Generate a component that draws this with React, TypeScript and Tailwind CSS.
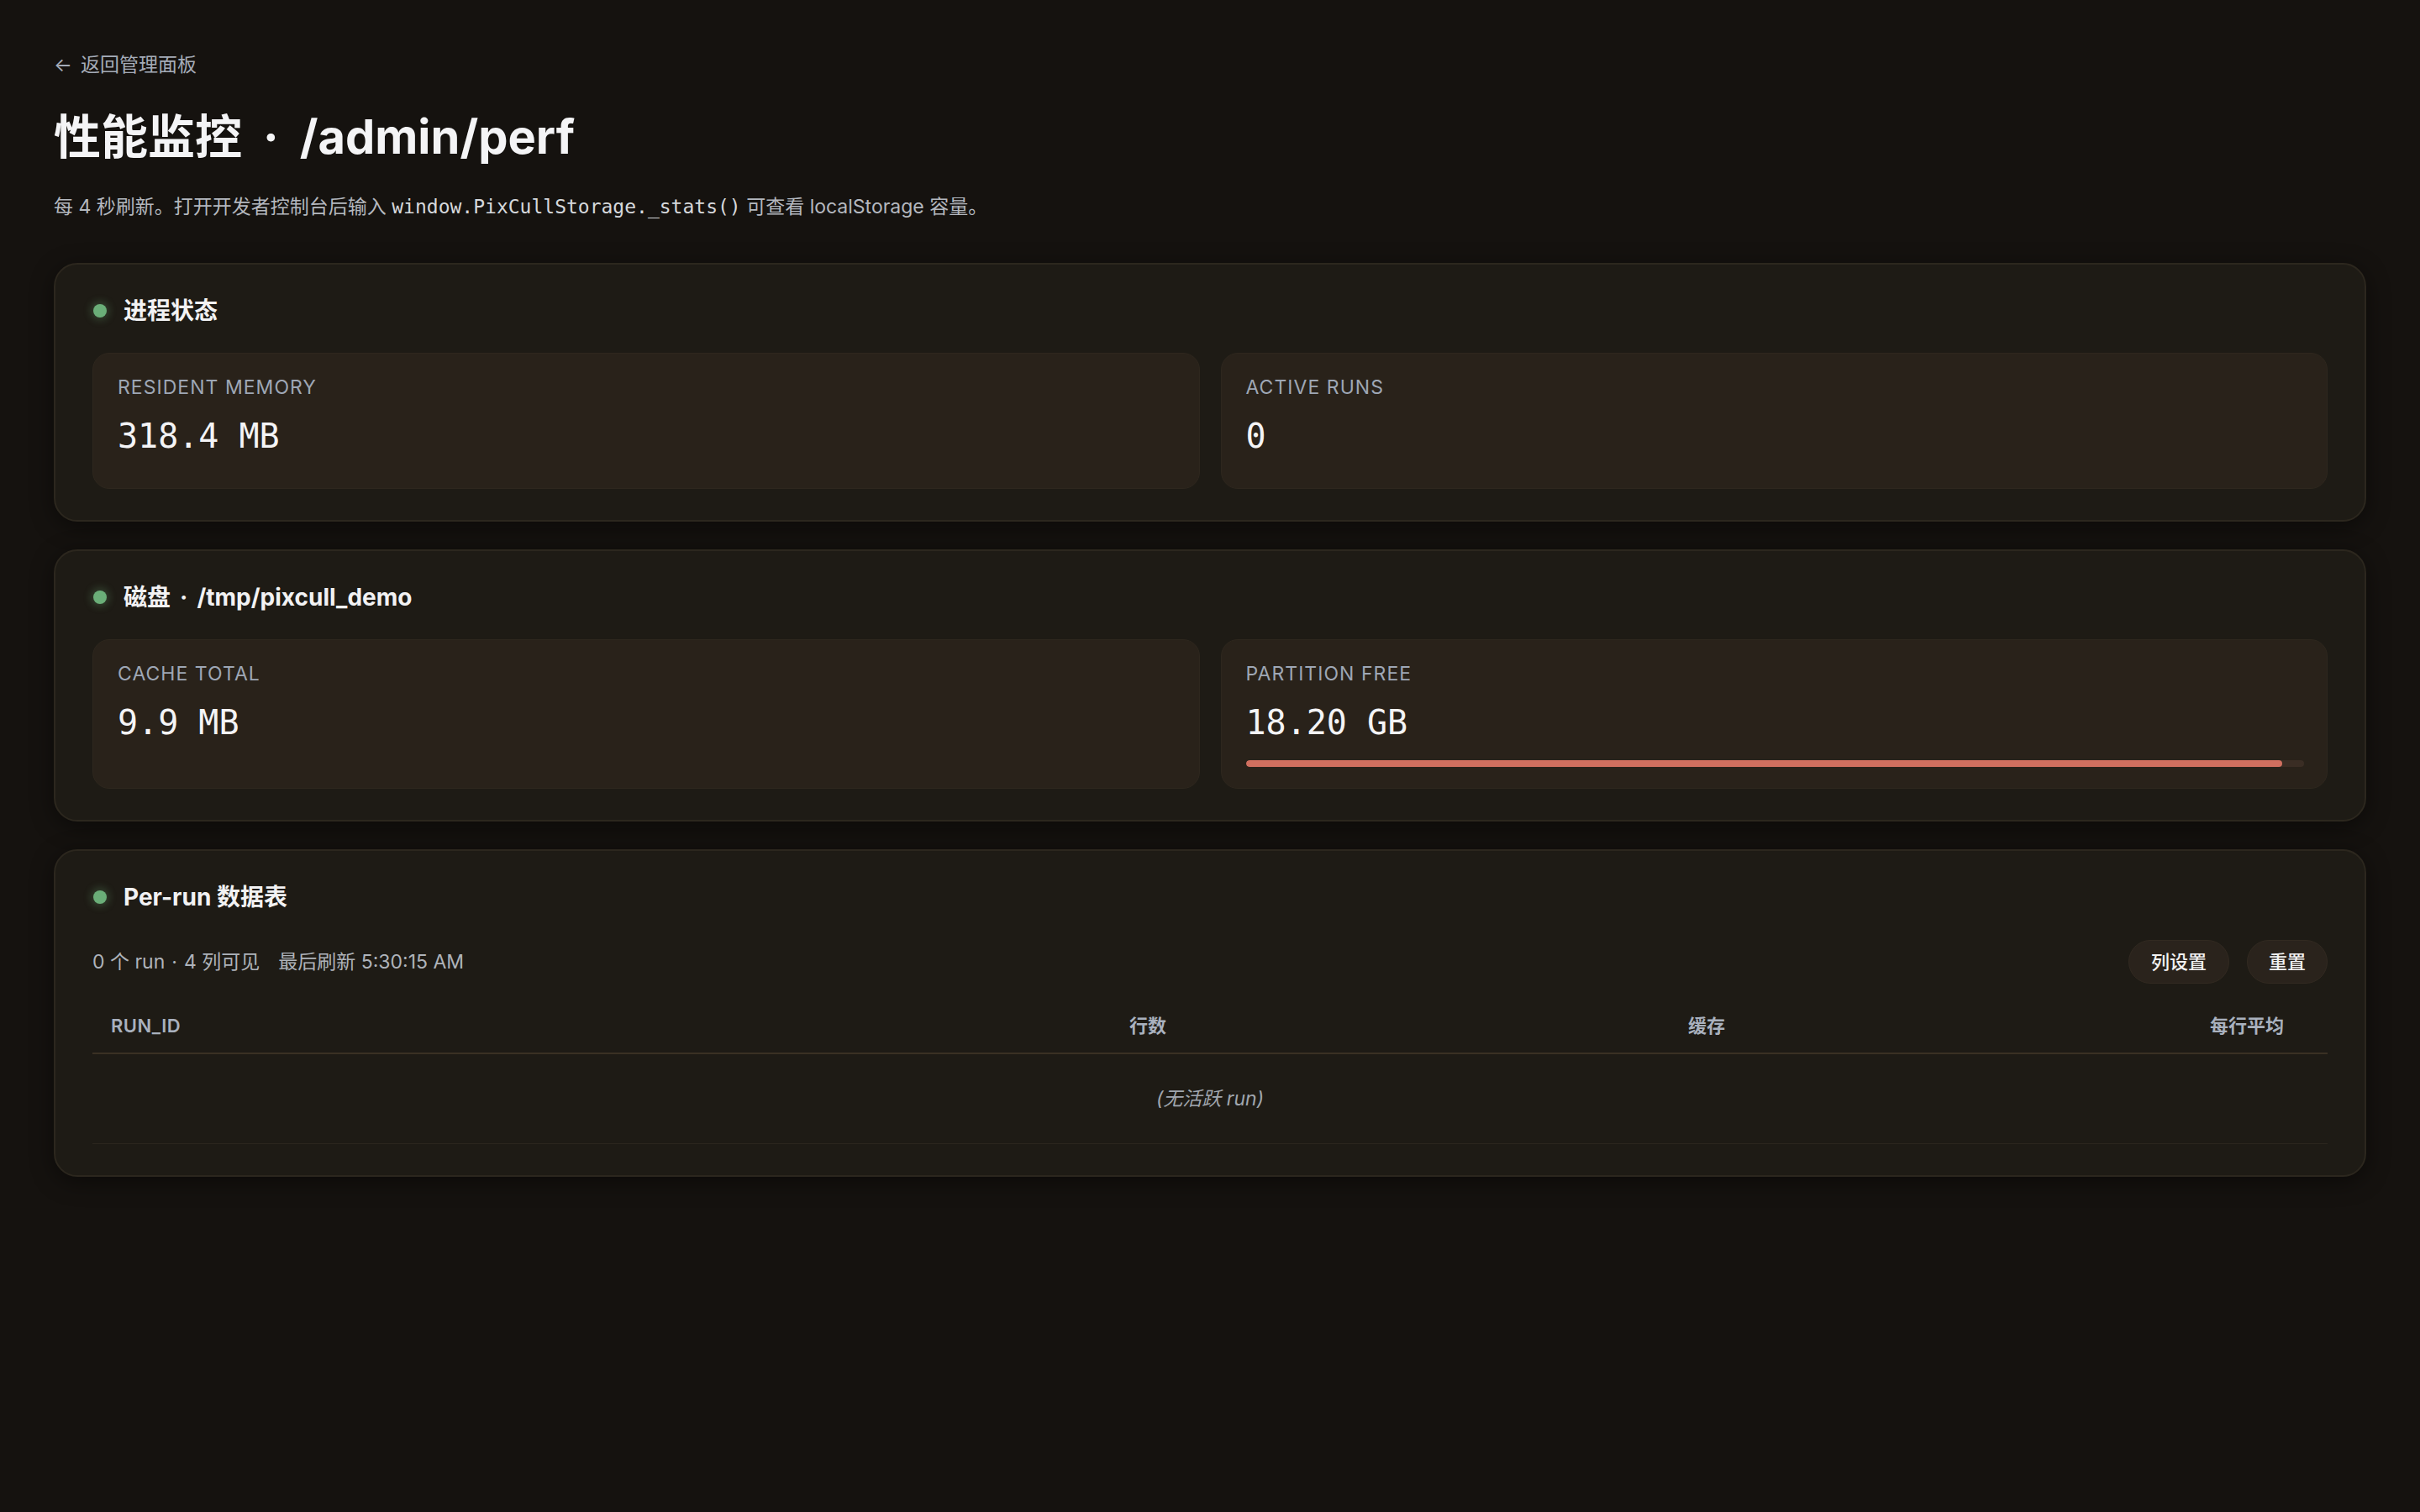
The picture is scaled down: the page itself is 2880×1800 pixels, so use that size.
import React from "react";

const SANS = "font-['Inter','Noto_Sans_CJK_SC',sans-serif]";
const MONO = "font-['DejaVu_Sans_Mono','Liberation_Mono',monospace]";

function Dot() {
  return (
    <span className="w-[16px] h-[16px] rounded-full bg-[#6aae78] shadow-[0_0_10px_3px_rgba(106,174,120,0.28)] shrink-0" />
  );
}

function CardTitle({ children }: { children: React.ReactNode }) {
  return (
    <div className="flex items-center gap-[20px] h-[40px] pl-[1px]">
      <Dot />
      <div className="text-[28px] font-bold text-[#f2f2f3] leading-[40px]">{children}</div>
    </div>
  );
}

function Card({ children }: { children: React.ReactNode }) {
  return (
    <div className="rounded-[28px] border-2 border-[#2c271e] bg-[#1e1b15] pt-[35px] px-[44px] pb-[37px] shadow-[0_6px_28px_rgba(0,0,0,0.45)]">
      {children}
    </div>
  );
}

function Stat({
  label,
  value,
  bar,
}: {
  label: string;
  value: string;
  bar?: number;
}) {
  return (
    <div
      className={
        "rounded-[20px] bg-[#29221a] border border-[#2e271e] pt-[23px] pl-[29px] pr-[27px] " +
        (bar !== undefined ? "pb-[25px]" : "pb-[38px]")
      }
    >
      <div className="text-[23px] leading-[34px] tracking-[0.045em] text-[#9ea7b5] uppercase">
        {label}
      </div>
      <div className={MONO + " slashed-zero mt-[17px] text-[40px] leading-[48px] text-[#f4f4f6]"}>{value}</div>
      {bar !== undefined && (
        <div className="mt-[21px] h-[8px] rounded-full bg-[#3a2d24] overflow-hidden">
          <div className="h-full rounded-full bg-[#d06f5f]" style={{ width: `${bar}%` }} />
        </div>
      )}
    </div>
  );
}

export default function App() {
  return (
    <div className={SANS + " min-h-screen w-full bg-[#15120f] text-[#e8e8ea]"}>
      <div className="px-[64px] pt-[60px] pb-[80px]">
        <div className="text-[23px] leading-[34px] text-[#a5acb8]">
          ←<span className="ml-[10px]">返回管理面板</span>
        </div>
        <h1 className="mt-[35px] text-[56px] leading-[68px] font-bold text-[#f4f4f6]">
          性能监控<span className="mx-[25px]">·</span>/admin/perf
        </h1>
        <p className="mt-[32px] text-[23px] leading-[34px] text-[#b4b8bf]">
          每 4 秒刷新。打开开发者控制台后输入{" "}
          <code className={MONO + " text-[23px] text-[#d6d8dc]"}>window.PixCullStorage._stats()</code>{" "}
          可查看 localStorage 容量。
        </p>

        <div className="mt-[50px] flex flex-col gap-[33px]">
          <Card>
            <CardTitle>进程状态</CardTitle>
            <div className="mt-[30px] grid grid-cols-2 gap-[25px]">
              <Stat label="Resident memory" value="318.4 MB" />
              <Stat label="Active runs" value="0" />
            </div>
          </Card>

          <Card>
            <CardTitle>
              磁盘<span className="mx-[11px]">·</span>/tmp/pixcull_demo
            </CardTitle>
            <div className="mt-[30px] grid grid-cols-2 gap-[25px]">
              <Stat label="Cache total" value="9.9 MB" bar={undefined} />
              <Stat label="Partition free" value="18.20 GB" bar={97.9} />
            </div>
          </Card>

          <Card>
            <CardTitle>Per-run 数据表</CardTitle>
            <div className="mt-[31px] flex items-center justify-between h-[52px]">
              <div className="text-[23px] leading-[34px] text-[#aeb3ba] flex items-center">
                <span>
                  0 个 run<span className="mx-[8px]">·</span>4 列可见
                </span>
                <span className="ml-[22px]">最后刷新 5:30:15 AM</span>
              </div>
              <div className="flex items-center gap-[21px]">
                <button className="h-[52px] px-[26px] rounded-full bg-[#2a231c] border border-[#322a21] text-[22px] font-medium text-[#f2f2f2]">
                  列设置
                </button>
                <button className="h-[52px] px-[25px] rounded-full bg-[#2a231c] border border-[#322a21] text-[22px] font-medium text-[#f2f2f2]">
                  重置
                </button>
              </div>
            </div>
            <div className="mt-[18px]">
              <div className="grid grid-cols-4 h-[66px] items-center border-b-2 border-[#3a3123] text-[22px] font-semibold text-[#a9b1be]">
                <div className="pl-[22px] text-left tracking-[0.02em]">RUN_ID</div>
                <div className="pr-[52px] text-right">行数</div>
                <div className="pr-[52px] text-right">缓存</div>
                <div className="pr-[52px] text-right">每行平均</div>
              </div>
              <div className="h-[107px] flex items-center justify-center border-b border-[#2b261e] text-[23px] italic text-[#a0a6ae]">
                (无活跃 run)
              </div>
            </div>
          </Card>
        </div>
      </div>
    </div>
  );
}
